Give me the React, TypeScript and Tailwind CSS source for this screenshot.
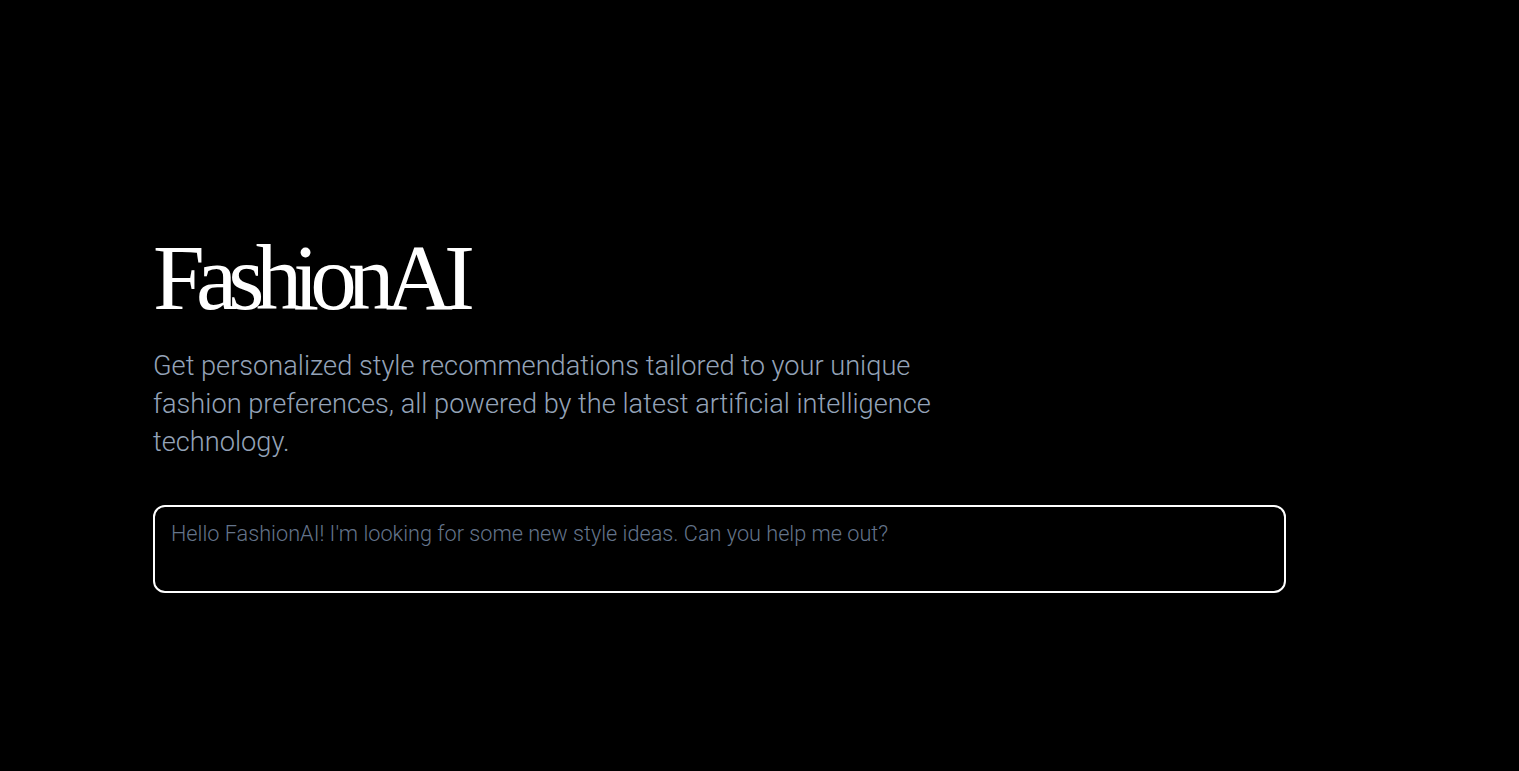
export default function App() {
  return (
    <div className="min-h-screen w-full bg-black" style={{ fontFamily: 'Roboto, "Liberation Sans", sans-serif' }}>
      <main className="pl-[153px] pt-[227px]">
        <h1 className="text-[93px] leading-[1.1] text-white tracking-[-0.095em] font-normal" style={{ fontFamily: '"Liberation Serif", serif' }}>
          FashionAI
        </h1>
        <p className="mt-[18px] max-w-[800px] text-[27.2px] leading-[38px] font-light text-[#94a3b8]">
          Get personalized style recommendations tailored to your unique fashion preferences, all powered by the latest artificial intelligence technology.
        </p>
        <div className="mt-[44px] w-[1133px]">
          <textarea
            rows={2}
            placeholder="Hello FashionAI! I'm looking for some new style ideas. Can you help me out?"
            className="block h-[88px] w-full resize-none rounded-xl border-2 border-white bg-black px-4 py-[13px] text-[21.7px] font-light leading-7 text-white outline-none placeholder:text-[#64748b]"
          />
        </div>
      </main>
    </div>
  );
}
